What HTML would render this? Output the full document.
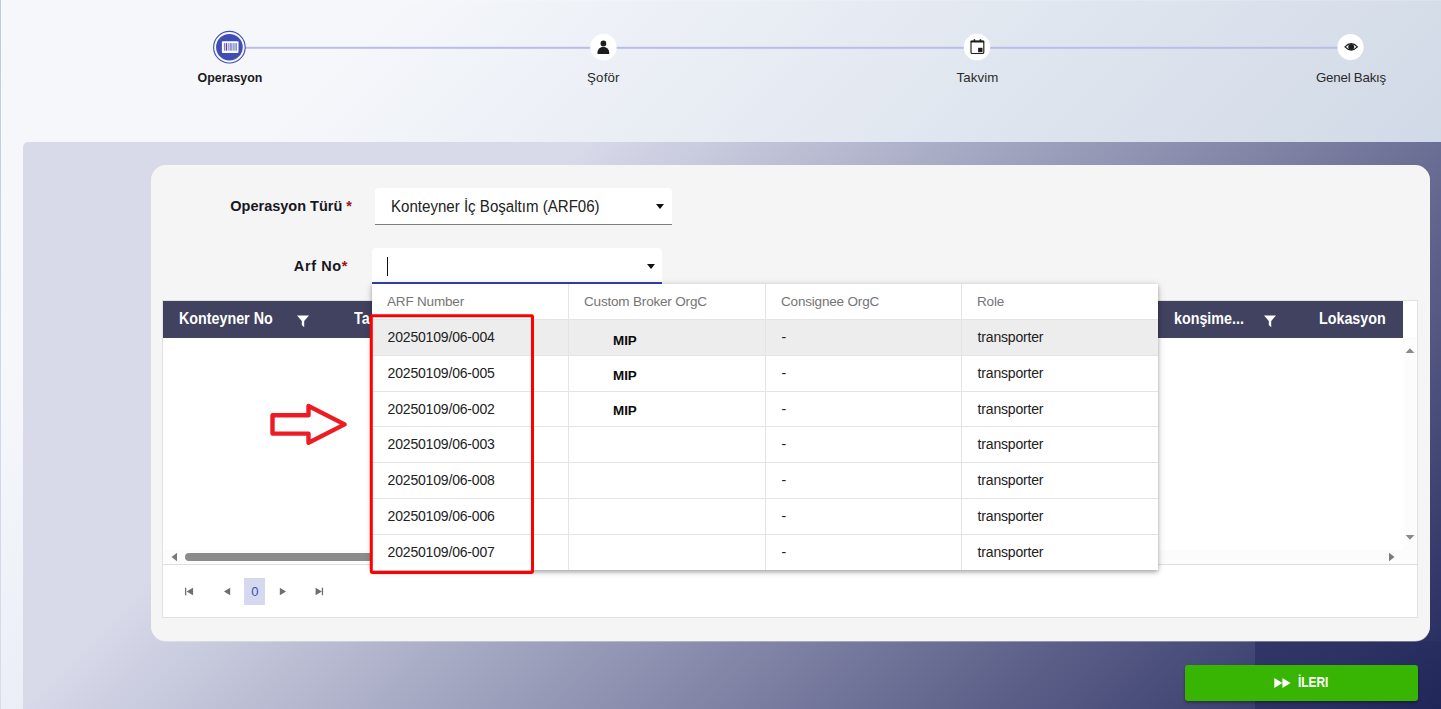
<!DOCTYPE html>
<html lang="tr">
<head>
<meta charset="utf-8">
<title>Operasyon</title>
<style>
*{box-sizing:border-box;margin:0;padding:0}
html,body{width:1441px;height:709px;overflow:hidden}
body{position:relative;font-family:"Liberation Sans",sans-serif;color:#212121;
 background:linear-gradient(135deg,#f6f7fb 0%,#f5f7fb 13.5%,#d5dde9 50%,#cdd7e4 58%) 0 0/1441px 1441px no-repeat #f5f6fa;}
.abs{position:absolute}
.edge{left:0;top:0;width:1px;height:709px;background:linear-gradient(180deg,#bfc9de,#ccd6e7 45%,#d6ddec)}
/* stepper */
.sline{left:245px;top:47px;width:1093px;height:2px;background:#b9bde8}
.dot{width:27px;height:27px;border-radius:50%;background:#fff;top:34px}
.dot.w{width:26.5px;height:26.5px}
.dot.act{background:#3f4db5;box-shadow:0 0 0 2px #f6f7fb,0 0 0 3.2px #3f4db5}
.slab{top:70px;width:120px;text-align:center;font-size:13.3px;line-height:16px;color:#2a2a2a;white-space:nowrap}
.slab.b{font-weight:bold;color:#1a1a1a;font-size:13.1px;transform:scaleX(.947)}
/* panel */
.panel{left:23px;top:142px;width:1418px;height:609px;border-radius:5px 0 0 0;
 background:linear-gradient(135deg,#d8daea 27.8%,#1d2257 100%)}
.dark{left:1255px;top:641px;width:186px;height:68px;background:linear-gradient(90deg,rgba(28,33,84,.45),rgba(28,33,84,.2))}
.card{left:151px;top:165px;width:1279px;height:476px;box-shadow:0 .6px 0 0 rgba(245,245,245,.7);border-radius:15px;background:#f5f5f5}
.lbl{font-weight:bold;font-size:14.5px;color:#17171f;white-space:nowrap;text-align:right;width:200px;line-height:18px}
.lbl i{font-style:normal;color:#a01218}
.sel{background:#fff;border-radius:4px 4px 0 0}
.sel1{left:375px;top:188px;width:297px;height:37px;border-bottom:1px solid #7d7d7d}
.sel2{left:372px;top:248px;width:290px;height:36px;border-bottom:2px solid #3342ad}
.sel1 span{position:absolute;left:16px;top:7.6px;font-size:16.3px;line-height:20px;color:#222;white-space:nowrap;transform:scaleX(.926);transform-origin:0 0}
.tri{width:0;height:0;border-left:4px solid transparent;border-right:4px solid transparent;border-top:5px solid #111}
.caret{left:387px;top:257px;width:1px;height:19px;background:#111}
/* grid */
.grid{left:162px;top:300px;width:1256px;height:318px;background:#fff;border:1px solid #e2e2e2}
.ghead{left:163px;top:301px;width:1240px;height:36.5px;background:#40425f}
.gh{top:309.3px;font-weight:bold;font-size:16.4px;line-height:18px;color:#fff;white-space:nowrap;transform:scaleX(.872);transform-origin:0 0}
.hsep{left:163px;top:564px;width:1254px;height:1px;background:#dedede}
.hbar{left:163px;top:550px;width:1254px;height:14px;background:#fcfcfc}
.vbar{left:1403px;top:337px;width:14px;height:213px;background:#fcfcfc}
.thumb{left:185px;top:553px;width:300px;height:8px;border-radius:4px;background:#8b8b8b}
.pg0{left:244px;top:578px;width:20.5px;padding-left:1px;height:27px;background:#d5d8ee;color:#3f4db5;font-size:13px;line-height:27px;text-align:center}
/* dropdown */
.dd{left:372px;top:284px;width:786px;height:286px;background:#fff;box-shadow:0 2px 4px rgba(0,0,0,.28),0 1px 8px rgba(0,0,0,.14)}
.dd table{border-collapse:separate;border-spacing:0;width:786px;table-layout:fixed;font-size:13px}
.dd td,.dd th{height:36px;padding:0 0 0 15px;text-align:left;border-left:1px solid #e4e4e4;border-top:1px solid #e4e4e4;font-weight:normal;color:#212121;white-space:nowrap}
.dd th{color:#757575;border-top:0;height:35px;padding-bottom:1px;font-size:13.5px;letter-spacing:-.18px}
.dd td{font-size:14px;letter-spacing:-.18px;padding-left:15.6px;padding-bottom:1px;position:relative}
.dd td:first-child,.dd th:first-child{border-left:0}
.dd tr.h td{background:#ededed}
.dd b{font-size:13.4px;letter-spacing:0;color:#0a0a0a;position:absolute;left:44px;top:13px;line-height:16px}
.dd tr.m2 b{top:12px}
.dd tr.m3 b{top:11px}
.dd tr.s td{height:35px}
.redbox{left:370px;top:315px;width:164px;height:259px;border:3px solid #ff0000;border-radius:2px}
.btn{left:1185px;top:665px;width:233px;height:36px;border-radius:3px;background:#38b502;box-shadow:0 2px 3px rgba(0,0,0,.3)}
.btn span{position:absolute;left:113.1px;top:9.6px;font-weight:bold;font-size:13.8px;line-height:16px;color:#fff;transform:scaleX(.86);transform-origin:0 50%}
</style>
</head>
<body>
<div class="abs edge"></div>
<div class="abs" style="left:1px;top:0;width:1px;height:142px;background:rgba(255,255,255,.5)"></div>
<div class="abs" style="left:1px;top:0;width:1440px;height:1px;background:rgba(255,255,255,.17)"></div>

<!-- stepper -->
<svg class="abs" style="left:0;top:0" width="1441" height="100" viewBox="0 0 1441 100">
 <rect x="245" y="46.8" width="1093" height="2" fill="#b9bde8"/>
 <circle cx="229.4" cy="47.2" r="15.8" fill="#f8f8fc" stroke="#3f4db5" stroke-width="1.1"/>
 <circle cx="229.4" cy="47.2" r="13.3" fill="#3f4db5"/>
 <circle cx="603.4" cy="47.1" r="13.25" fill="#fff"/>
 <circle cx="977" cy="47.1" r="13.25" fill="#fff"/>
 <circle cx="1350.5" cy="47.1" r="13.1" fill="#fff"/>
 <!-- barcode -->
 <rect x="221.9" y="41.2" width="16.6" height="11.9" rx="1" fill="#fff"/>
 <g fill="#3f4db5"><rect x="223.9" y="43.1" width=".8" height="7.6"/><rect x="225.7" y="43.1" width="1.5" height="7.6" fill="#6a3fa0"/><rect x="228.5" y="43.1" width=".8" height="7.6"/><rect x="230.4" y="43.1" width="1.1" height="7.6"/><rect x="232.7" y="43.1" width=".8" height="7.6"/><rect x="234.6" y="43.1" width=".8" height="7.6"/><rect x="236.2" y="43.1" width=".6" height="7.6"/></g>
 <!-- person -->
 <circle cx="603.4" cy="43.4" r="2.85" fill="#1d1d1d"/>
 <path d="M597.5 54.1v-1.7a5.8 5.6 0 0 1 11.7 0v1.7z" fill="#1d1d1d"/>
 <!-- calendar -->
 <rect x="971" y="41.2" width="12.8" height="12.3" rx="1.3" fill="none" stroke="#1d1d1d" stroke-width="1.15"/>
 <rect x="970.4" y="40.6" width="14" height="1.9" rx=".8" fill="#1d1d1d"/>
 <rect x="973.7" y="39.2" width="1.5" height="2.4" fill="#1d1d1d"/><rect x="979.7" y="39.2" width="1.5" height="2.4" fill="#1d1d1d"/>
 <rect x="978.1" y="47.8" width="4.4" height="4.4" fill="#1d1d1d"/>
 <!-- eye -->
 <path d="M1345 46.9Q1351.2 40.5 1357.4 46.9Q1351.2 53.3 1345 46.9z" fill="#fff" stroke="#1d1d1d" stroke-width="1.2"/>
 <circle cx="1351.2" cy="46.9" r="3" fill="#1d1d1d"/>
</svg>
<div class="abs slab b" style="left:169.5px">Operasyon</div>
<div class="abs slab" style="left:543.4px;letter-spacing:.18px">Şoför</div>
<div class="abs slab" style="left:917.5px;letter-spacing:.1px">Takvim</div>
<div class="abs slab" style="left:1291px;letter-spacing:-.22px">Genel Bakış</div>

<!-- panel + card -->
<div class="abs panel"></div>
<div class="abs dark"></div>
<div class="abs card"></div>

<div class="abs lbl" style="left:152px;top:197px">Operasyon Türü <i>*</i></div>
<div class="abs lbl" style="left:148px;top:257px;letter-spacing:.6px">Arf No<i>*</i></div>
<div class="abs sel sel1"><span>Konteyner İç Boşaltım (ARF06)</span></div>
<div class="abs tri" style="left:656px;top:204px"></div>
<div class="abs sel sel2"></div>
<div class="abs tri" style="left:647px;top:264px"></div>
<div class="abs caret"></div>

<!-- grid -->
<div class="abs grid"></div>
<div class="abs ghead"></div>
<div class="abs gh" style="left:178.7px">Konteyner No</div>
<div class="abs gh" style="left:354px">Ta</div>
<div class="abs gh" style="left:1174px">konşime...</div>
<div class="abs gh" style="left:1319.3px">Lokasyon</div>
<svg class="abs" style="left:296px;top:314px" width="14" height="14" viewBox="0 0 14 14"><path d="M1 1.5h12L8.2 7v6.2L5.8 11V7z" fill="#fff"/></svg>
<svg class="abs" style="left:1263px;top:314px" width="14" height="14" viewBox="0 0 14 14"><path d="M1 1.5h12L8.2 7v6.2L5.8 11V7z" fill="#fff"/></svg>
<div class="abs vbar"></div>
<div class="abs hbar"></div>
<div class="abs hsep"></div>
<div class="abs thumb"></div>
<svg class="abs" style="left:170px;top:552px" width="8" height="10" viewBox="0 0 8 10"><path d="M7 .8v8.4L1.5 5z" fill="#7a7a7a"/></svg>
<svg class="abs" style="left:1388px;top:552.4px" width="8" height="10" viewBox="0 0 8 10"><path d="M1 .8v8.4L6.5 5z" fill="#7a7a7a"/></svg>
<svg class="abs" style="left:1405px;top:347px" width="10" height="7" viewBox="0 0 10 7"><path d="M.6 6h8.8L5 1.2z" fill="#8a8a8a"/></svg>
<svg class="abs" style="left:1405px;top:534px" width="10" height="7" viewBox="0 0 10 7"><path d="M.6 1h8.8L5 5.8z" fill="#8a8a8a"/></svg>
<!-- pager -->
<svg class="abs" style="left:184px;top:587px" width="10" height="9" viewBox="0 0 10 9"><path d="M1 .8h1.3v7.4H1zM9.1 .8v7.4L2.6 4.5z" fill="#6e6e6e"/></svg>
<svg class="abs" style="left:223px;top:587px" width="8" height="9" viewBox="0 0 8 9"><path d="M7.2 .8v7.4L1 4.5z" fill="#6e6e6e"/></svg>
<div class="abs pg0">0</div>
<svg class="abs" style="left:279px;top:587px" width="8" height="9" viewBox="0 0 8 9"><path d="M.8 .8v7.4L7 4.5z" fill="#6e6e6e"/></svg>
<svg class="abs" style="left:315px;top:587px" width="10" height="9" viewBox="0 0 10 9"><path d="M6.8 .8h1.3v7.4H6.8zM.6 .8v7.4L6.8 4.5z" fill="#6e6e6e"/></svg>

<!-- dropdown -->
<div class="abs dd">
<table>
<colgroup><col style="width:196px"><col style="width:197px"><col style="width:196px"><col style="width:197px"></colgroup>
<tr><th>ARF Number</th><th>Custom Broker OrgC</th><th>Consignee OrgC</th><th>Role</th></tr>
<tr class="h"><td>20250109/06-004</td><td><b>MIP</b></td><td>-</td><td>transporter</td></tr>
<tr class="m2"><td>20250109/06-005</td><td><b>MIP</b></td><td>-</td><td>transporter</td></tr>
<tr class="s m3"><td>20250109/06-002</td><td><b>MIP</b></td><td>-</td><td>transporter</td></tr>
<tr><td>20250109/06-003</td><td></td><td>-</td><td>transporter</td></tr>
<tr><td>20250109/06-008</td><td></td><td>-</td><td>transporter</td></tr>
<tr><td>20250109/06-006</td><td></td><td>-</td><td>transporter</td></tr>
<tr><td>20250109/06-007</td><td></td><td>-</td><td>transporter</td></tr>
</table>
</div>
<svg class="abs" style="left:360px;top:305px" width="190" height="280" viewBox="360 305 190 280"><rect x="371.3" y="315.7" width="161.2" height="256.7" rx=".8" fill="none" stroke="#ff0000" stroke-width="3"/></svg>
<svg class="abs" style="left:262px;top:396px" width="96" height="58" viewBox="262 396 96 58"><path d="M272.5 415.2H308.5V406L344.6 424.4L308.5 442.7V433.6H272.5z" fill="none" stroke="#ed1c24" stroke-width="4.4" stroke-linejoin="round"/></svg>

<!-- button -->
<div class="abs btn"><svg style="position:absolute;left:88.6px;top:12px" width="17" height="12" viewBox="0 0 17 12"><path d="M.3 .9v10.2L8.4 6zM8.4 .9v10.2L16.6 6z" fill="#fff"/></svg><span>İLERI</span></div>
</body>
</html>
